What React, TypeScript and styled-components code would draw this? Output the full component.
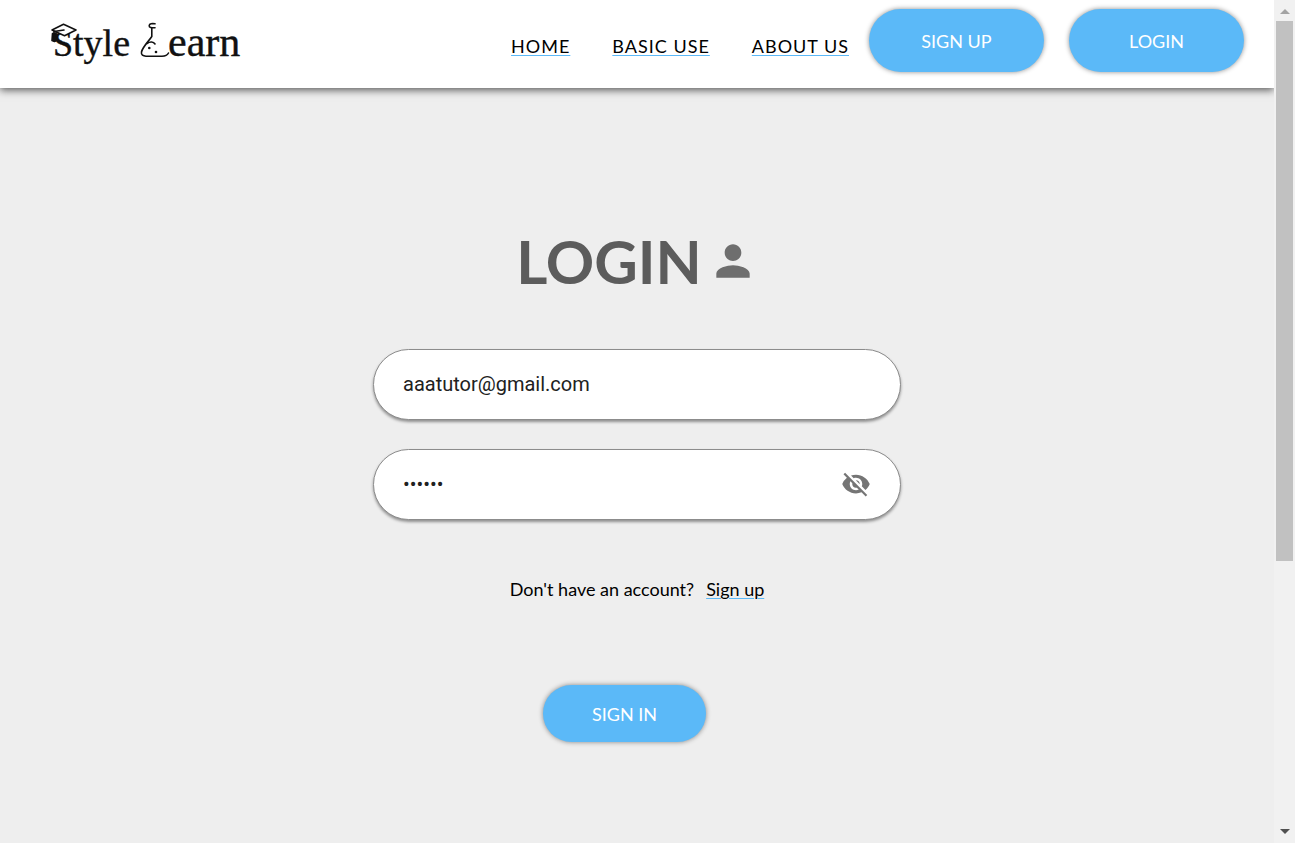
import React, { useState } from "react";
import styled, { createGlobalStyle } from "styled-components";
import { MdPerson, MdVisibilityOff, MdVisibility } from "react-icons/md";

const GlobalStyle = createGlobalStyle`
  * { box-sizing: border-box; }
  body {
    margin: 0;
    background: #eeeeee;
    color: #000;
    font-family: Lato, "Open Sans", sans-serif;
  }
`;

const Shell = styled.div`
  display: grid;
  grid-template-columns: minmax(0, 1fr) 21px;
  min-height: 100vh;
`;

const Page = styled.div`
  display: flex;
  flex-direction: column;
`;

const Header = styled.header`
  display: flex;
  align-items: flex-start;
  justify-content: space-between;
  min-height: 88px;
  padding: 9px 30px 16px 51px;
  background: #fff;
  box-shadow: 0 2px 8px rgba(0, 0, 0, 0.65);
  clip-path: inset(0 0 -16px 0);
`;

const LogoLink = styled.a`
  display: block;
  padding-top: 13px;
  color: #111;

  svg { display: block; }
`;

const HeaderRight = styled.div`
  display: flex;
  gap: 20px;
`;

const Nav = styled.nav`
  display: flex;
  gap: 42px;
  padding-top: 25px;
`;

const NavLink = styled.a`
  color: #000;
  font-size: 18px;
  line-height: 24px;
  letter-spacing: 1px;
  text-decoration: underline 1px #5bb9f8;
  text-underline-offset: 2px;
`;

const Actions = styled.div`
  display: flex;
  gap: 25px;
`;

const PillButton = styled.button<{ $size: "large" | "medium" }>`
  width: ${({ $size }) => ($size === "large" ? 175 : 163)}px;
  height: ${({ $size }) => ($size === "large" ? 63 : 57)}px;
  padding: 0;
  border: 0;
  border-radius: 32px;
  background: #5bb9f8;
  box-shadow: 0 0 5px rgba(0, 0, 0, 0.45);
  color: #fff;
  font-family: inherit;
  font-size: 18px;
  cursor: pointer;
`;

const Main = styled.main`
  display: flex;
  flex-direction: column;
  align-items: center;
  padding: 136px 24px 100px;
`;

const Title = styled.h1`
  display: flex;
  align-items: center;
  gap: 6px;
  margin: 0;
  color: #5c5c5c;
  font-size: 60px;
  line-height: 74px;
  font-weight: 700;

  svg { color: #6e6e6e; }
`;

const Form = styled.form`
  display: flex;
  flex-direction: column;
  align-items: center;
  gap: 29px;
  width: 100%;
  max-width: 528px;
  margin-top: 51px;
`;

const Field = styled.label`
  display: flex;
  align-items: center;
  width: 100%;
  height: 71px;
  padding: 0 29px 1px;
  border: 1px solid #8c8c8c;
  border-radius: 36px;
  background: #fff;
  box-shadow: 0 2px 3px rgba(0, 0, 0, 0.4);
`;

const Input = styled.input`
  flex: 1;
  min-width: 0;
  padding: 0;
  border: 0;
  outline: 0;
  background: transparent;
  color: #212121;
  font-family: Roboto, sans-serif;
  font-size: 20px;
  line-height: 24px;
`;

const IconButton = styled.button`
  display: flex;
  padding: 0;
  border: 0;
  background: none;
  color: #757575;
  cursor: pointer;
`;

const Prompt = styled.p`
  display: flex;
  gap: 12px;
  margin: 28px 0 55px;
  font-size: 18px;
  line-height: 24px;
`;

const PromptLink = styled.a`
  color: #000;
  text-decoration: underline 1px #5bb9f8;
  text-underline-offset: 2px;
`;

const Submit = styled.div`
  padding-right: 25px;
`;

const ScrollTrack = styled.div`
  display: flex;
  flex-direction: column;
  align-items: center;
  padding: 9px 2px;
  background: #f1f1f1;
`;

const ScrollThumb = styled.div`
  width: 17px;
  height: 64vh;
  margin: 7px 0 auto;
  background: #c1c1c1;
`;

const Arrow = styled.div<{ $down?: boolean }>`
  border: 5px solid transparent;
  ${({ $down }) =>
    $down
      ? "border-top-color: #505050; border-bottom: 0;"
      : "border-bottom-color: #a3a3a3; border-top: 0;"}
`;

function Logo() {
  return (
    <svg width="200" height="46" viewBox="0 0 200 46" role="img" aria-label="Style Learn">
      <g fill="currentColor" stroke="currentColor" strokeWidth="0.4" fontFamily="'Liberation Serif', serif">
        <text x="2" y="34" fontSize="38">
          <tspan fontSize="36">S</tspan>
          <tspan>tyle</tspan>
        </text>
        <text x="117" y="34" fontSize="42">earn</text>
      </g>
      <g fill="none" stroke="currentColor" strokeWidth="1.6" strokeLinejoin="round" strokeLinecap="round">
        <path d="M1 8 12.5 2.3 25 8 13.5 13.7Z" fill="#fff" />
        <path d="M13 8 3 9.5V12" />
        <path d="M1.5 11.5 5 11 6.5 18 3.5 19.5 1 18.5Z" fill="currentColor" />
        <path d="M104 1.8C101 1.4 98.4 1.6 98.2 3.5C98 5.5 100 5.8 104 5.8" />
        <path d="M100.8 6V14.5C97.5 19.5 91.5 25 90.5 30C90 33 92 34.2 95 34.2H111C115 34.2 116.5 33 117.5 31" />
        <path d="M96 21.5C99 19.2 102.5 19.5 104 22" />
      </g>
      <circle cx="98.3" cy="26" r="1.3" fill="currentColor" />
      <circle cx="105" cy="30" r="1.3" fill="currentColor" />
    </svg>
  );
}

export default function App() {
  const [visible, setVisible] = useState(false);

  return (
    <>
      <GlobalStyle />
      <Shell>
        <Page>
          <Header>
            <LogoLink href="#home"><Logo /></LogoLink>
            <HeaderRight>
              <Nav>
                <NavLink href="#home">HOME</NavLink>
                <NavLink href="#basic-use">BASIC USE</NavLink>
                <NavLink href="#about">ABOUT US</NavLink>
              </Nav>
              <Actions>
                <PillButton type="button" $size="large">SIGN UP</PillButton>
                <PillButton type="button" $size="large">LOGIN</PillButton>
              </Actions>
            </HeaderRight>
          </Header>
          <Main>
            <Title>LOGIN <MdPerson size={50} aria-hidden /></Title>
            <Form onSubmit={(event) => event.preventDefault()}>
              <Field>
                <Input type="email" aria-label="Email" defaultValue="aaatutor@gmail.com" />
              </Field>
              <Field>
                <Input
                  type={visible ? "text" : "password"}
                  aria-label="Password"
                  defaultValue="secret"
                />
                <IconButton
                  type="button"
                  aria-label="Toggle password visibility"
                  onClick={() => setVisible(!visible)}
                >
                  {visible ? <MdVisibility size={30} /> : <MdVisibilityOff size={30} />}
                </IconButton>
              </Field>
              <Prompt>
                Don't have an account?
                <PromptLink href="#signup">Sign up</PromptLink>
              </Prompt>
              <Submit>
                <PillButton type="submit" $size="medium">SIGN IN</PillButton>
              </Submit>
            </Form>
          </Main>
        </Page>
        <ScrollTrack aria-hidden>
          <Arrow />
          <ScrollThumb />
          <Arrow $down />
        </ScrollTrack>
      </Shell>
    </>
  );
}
